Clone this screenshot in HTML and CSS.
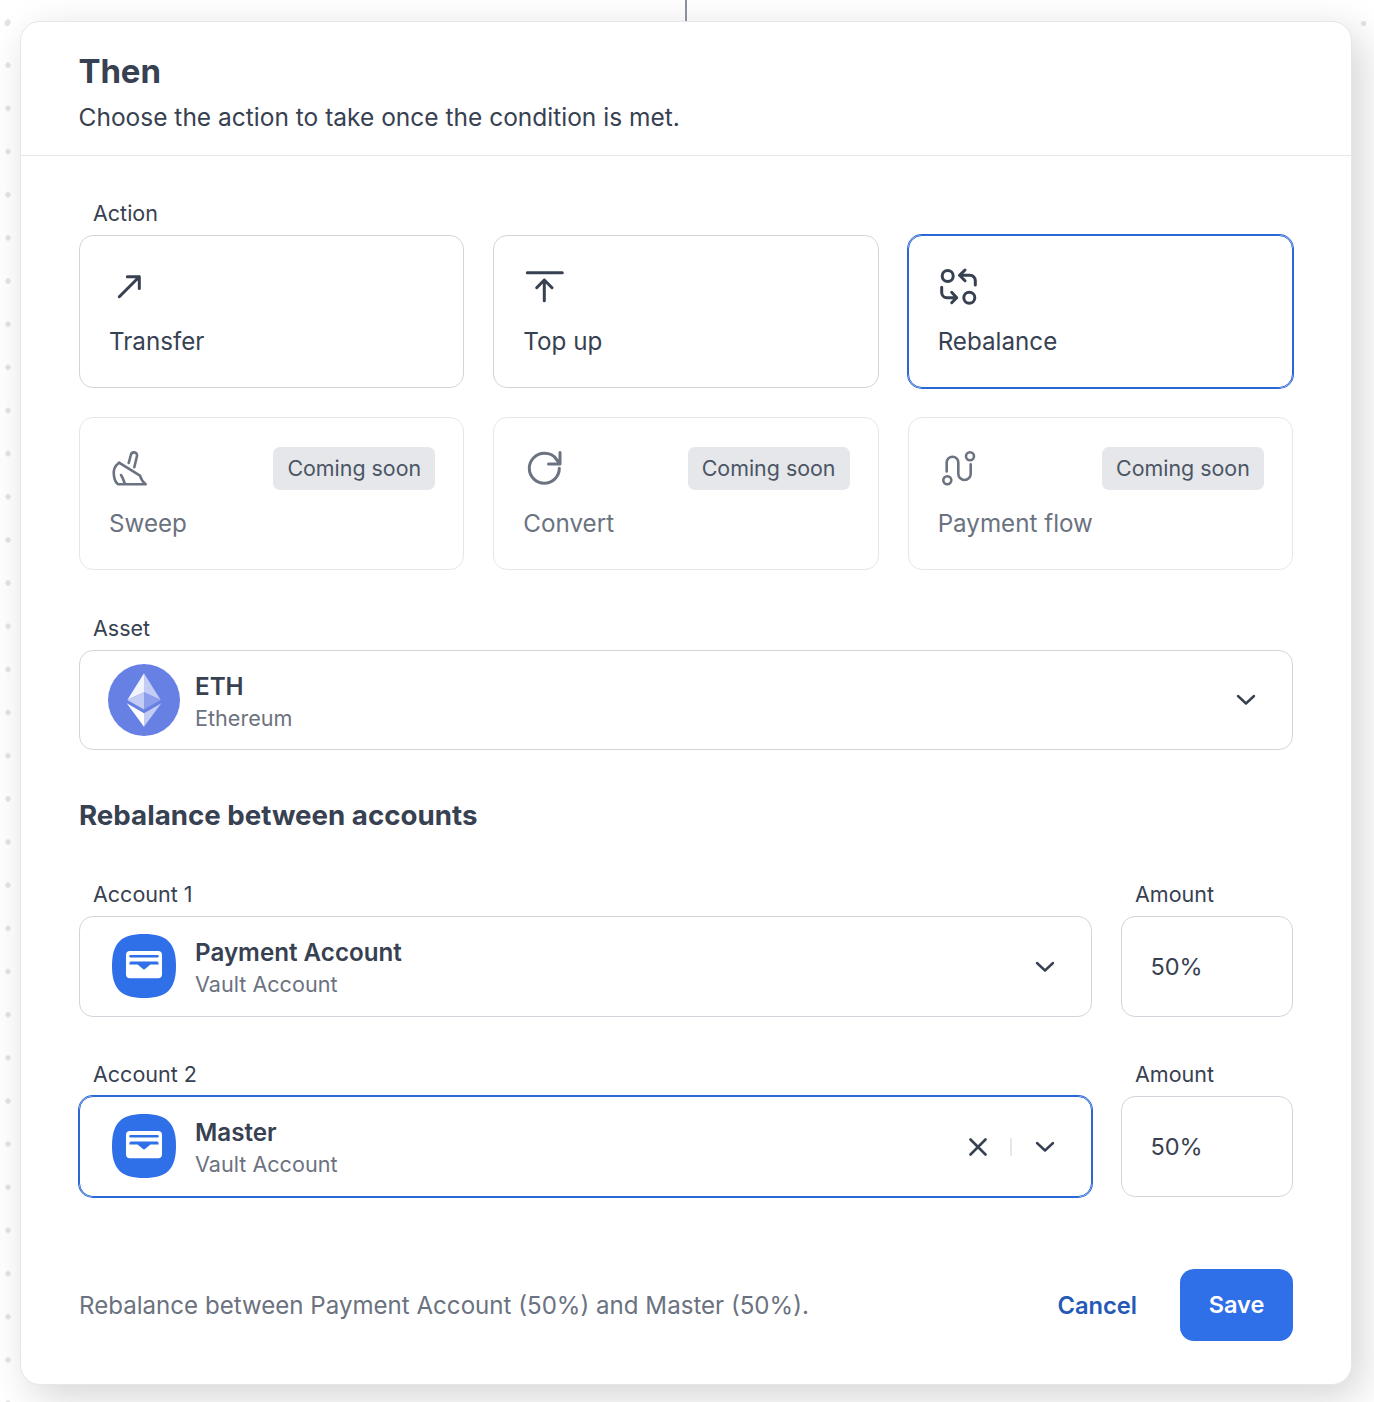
FILE: index.html
```html
<!DOCTYPE html>
<html lang="en">
<head>
<meta charset="utf-8">
<title>Then</title>
<link rel="stylesheet" href="styles.css">
</head>
<body>
<div class="connector"></div>
<main class="panel">
  <header class="panel-head">
    <h1 class="title">Then</h1>
    <p class="subtitle">Choose the action to take once the condition is met.</p>
  </header>
  <div class="panel-body">
    <div class="label">Action</div>
    <div class="actions">
      <div class="action">
        <div class="action-top">
          <svg class="icon" viewBox="0 0 43 43"><path d="M10.3 31.7 30.3 11.7M18.3 11.7H30.3V23.5"/></svg>
        </div>
        <div class="action-name">Transfer</div>
      </div>
      <div class="action">
        <div class="action-top">
          <svg class="icon" viewBox="0 0 43 43"><path d="M4.3 7.7H39.3M21.3 15V35.7M13.7 22.7 21.3 15 29 22.7"/></svg>
        </div>
        <div class="action-name">Top up</div>
      </div>
      <div class="action selected">
        <div class="action-top">
          <svg class="icon" viewBox="0 0 43 43"><circle cx="9.7" cy="11" r="5.5"/><circle cx="31.3" cy="32.7" r="5.5"/><path d="M27 5 21.5 10.3 27 15.7M21.5 10.3H32a5.3 5.3 0 0 1 5.3 5.3V20M3.7 22.3V27.5a5.2 5.2 0 0 0 5.2 5.2H18.7M13.7 27.3 18.7 32.7 13.7 37.7"/></svg>
        </div>
        <div class="action-name">Rebalance</div>
      </div>
      <div class="action disabled">
        <div class="action-top">
          <svg class="icon thin" viewBox="0 0 43 43"><path d="M10 15.7 31 28.7M19.7 16 21.7 8.5C22.5 4 28.5 4.5 28 9L25.3 20.3M10 15.7C5.5 19 4 24 5 29 5.5 33 7 36 9.3 37.3H36.7C33.5 35 32 32 31 28.7M12 28C14 31 15 34 16 37"/></svg>
          <span class="badge">Coming soon</span>
        </div>
        <div class="action-name">Sweep</div>
      </div>
      <div class="action disabled">
        <div class="action-top">
          <svg class="icon" viewBox="0 0 43 43"><path d="M36.3 21.3A15 15 0 1 1 21.3 6.3C26 6.3 31 8.5 33.5 12.5L37 17M37 5.5V17H25.5"/></svg>
          <span class="badge">Coming soon</span>
        </div>
        <div class="action-name">Convert</div>
      </div>
      <div class="action disabled">
        <div class="action-top">
          <svg class="icon thin" viewBox="0 0 43 43"><circle cx="32" cy="9.3" r="4"/><circle cx="9.3" cy="33.3" r="4"/><path d="M8.7 24.5V15.5a5.8 5.8 0 0 1 11.6 0V26.8a6.2 6.2 0 0 0 12.4 0V17.3"/></svg>
          <span class="badge">Coming soon</span>
        </div>
        <div class="action-name">Payment flow</div>
      </div>
    </div>

    <div class="label asset-label">Asset</div>
    <div class="select asset-select">
      <svg class="avatar-eth" viewBox="0 0 72 72">
        <circle cx="36" cy="36" r="36" fill="#6780e3"/>
        <polygon points="36,9.3 19.3,36 36,28.3" fill="#f1f3fd"/>
        <polygon points="36,9.3 36,28.3 52.7,36" fill="#c3ccf5"/>
        <polygon points="19.3,36 36,28.3 36,45.5" fill="#c3ccf5"/>
        <polygon points="36,28.3 52.7,36 36,45.5" fill="#8d9fec"/>
        <polygon points="18.7,39.3 36,49.3 36,62.7" fill="#fff"/>
        <polygon points="36,49.3 53.3,39.3 36,62.7" fill="#c3ccf5"/>
      </svg>
      <div class="select-text">
        <div class="select-name">ETH</div>
        <div class="select-sub">Ethereum</div>
      </div>
      <svg class="chev" viewBox="0 0 20 12"><path d="M2 2 10 9.5 18 2"/></svg>
    </div>

    <h2 class="section-title">Rebalance between accounts</h2>

    <div class="account-row">
      <div class="account-col">
        <div class="label">Account 1</div>
        <div class="select account-select">
          <svg class="avatar-vault" viewBox="0 0 64 64">
            <path class="vault-bg" d="M32 0C55 0 64 9 64 32S55 64 32 64 0 55 0 32 9 0 32 0Z"/>
            <rect class="vault-card" x="14" y="17" width="36" height="27.3" rx="4"/>
            <rect class="vault-bg" x="17.3" y="21" width="29.4" height="2.4" rx="1.2"/>
            <path class="vault-bg" d="M19 27.5H45Q46.7 27.5 46.7 30.5H38.5L32 35.8 25.5 30.5H17.3Q17.3 27.5 19 27.5Z"/>
          </svg>
          <div class="select-text">
            <div class="select-name">Payment Account</div>
            <div class="select-sub">Vault Account</div>
          </div>
          <svg class="chev" viewBox="0 0 20 12"><path d="M2 2 10 9.5 18 2"/></svg>
        </div>
      </div>
      <div class="amount-col">
        <div class="label">Amount</div>
        <div class="amount">50%</div>
      </div>
    </div>

    <div class="account-row second">
      <div class="account-col">
        <div class="label">Account 2</div>
        <div class="select account-select focused">
          <svg class="avatar-vault" viewBox="0 0 64 64">
            <path class="vault-bg" d="M32 0C55 0 64 9 64 32S55 64 32 64 0 55 0 32 9 0 32 0Z"/>
            <rect class="vault-card" x="14" y="17" width="36" height="27.3" rx="4"/>
            <rect class="vault-bg" x="17.3" y="21" width="29.4" height="2.4" rx="1.2"/>
            <path class="vault-bg" d="M19 27.5H45Q46.7 27.5 46.7 30.5H38.5L32 35.8 25.5 30.5H17.3Q17.3 27.5 19 27.5Z"/>
          </svg>
          <div class="select-text">
            <div class="select-name">Master</div>
            <div class="select-sub">Vault Account</div>
          </div>
          <svg class="clear" viewBox="0 0 18 18"><path d="M1.5 1.5 16.5 16.5M16.5 1.5 1.5 16.5"/></svg>
          <span class="divider"></span>
          <svg class="chev" viewBox="0 0 20 12"><path d="M2 2 10 9.5 18 2"/></svg>
        </div>
      </div>
      <div class="amount-col">
        <div class="label">Amount</div>
        <div class="amount">50%</div>
      </div>
    </div>

    <footer class="foot">
      <p class="summary">Rebalance between Payment Account (50%) and Master (50%).</p>
      <a class="cancel">Cancel</a>
      <a class="save">Save</a>
    </footer>
  </div>
</main>
</body>
</html>
```

FILE: styles.css
```css
* { box-sizing: border-box; }

html, body { margin: 0; height: 1402px; overflow: hidden; }

body {
  padding: 21px 22px 17px 20px;
  font-family: Inter, "Noto Sans", sans-serif;
  color: #374151;
  background-color: #fff;
  background-image:
    radial-gradient(circle, #e2e4e8 2.4px, transparent 3px),
    radial-gradient(circle, #e2e4e8 2.4px, transparent 3px);
  background-size: 32.3px 43px, 16px 43.17px;
  background-position: -9px 1.5px, 0 0.5px;
  background-repeat: repeat-x, repeat-y;
}

.connector {
  position: absolute;
  left: 685px;
  top: 0;
  width: 2px;
  height: 21px;
  background: #8a909c;
}

.panel {
  height: 1364px;
  background: #fff;
  border: 1px solid #e5e7eb;
  border-radius: 20px;
  box-shadow: 10px 12px 40px rgba(0, 0, 0, 0.17);
}

.panel-head {
  height: 134px;
  padding: 27px 58px 0 57.5px;
  border-bottom: 1px solid #e5e7eb;
}

.title {
  margin: 0;
  font-size: 33px;
  line-height: 44px;
  font-weight: 700;
  letter-spacing: -0.1px;
}

.subtitle {
  margin: 7px 0 0;
  font-size: 24.5px;
  line-height: 34px;
  font-weight: 400;
}

.panel-body { padding: 44px 58px 0; }

.label {
  padding-left: 14px;
  height: 36px;
  font-size: 21.5px;
  line-height: 26px;
}

.actions {
  display: grid;
  grid-template-columns: repeat(3, 1fr);
  gap: 29px;
  margin-top: -1px;
}

.action {
  height: 153px;
  padding: 29px;
  border: 1px solid #d1d5db;
  border-radius: 14px;
}

.action.selected {
  border-color: #2b68d6;
  box-shadow: 0 0 0 1px #2b68d6;
}

.action.disabled {
  border-color: #e5e7eb;
  color: #6b7280;
}

.action-top {
  display: flex;
  justify-content: space-between;
  align-items: flex-start;
  height: 43px;
}

.icon {
  width: 43px;
  height: 43px;
  fill: none;
  stroke: currentColor;
  stroke-width: 3;
  stroke-linecap: round;
  stroke-linejoin: round;
}

.icon.thin { stroke-width: 2.6; }

.badge {
  height: 43px;
  margin-right: -1px;
  padding: 0 14.2px;
  border-radius: 7px;
  background: #e5e7eb;
  color: #4b5563;
  font-size: 21.4px;
  line-height: 43px;
}

.action-name {
  margin-top: 18px;
  font-size: 24.2px;
  line-height: 32px;
}

.asset-label { margin-top: 45px; }

.select {
  display: flex;
  align-items: center;
  border: 1px solid #d1d5db;
  border-radius: 14px;
  margin-top: -1px;
}

.asset-select {
  height: 100px;
  padding: 0 36px 0 28px;
}

.avatar-eth {
  flex: none;
  width: 72px;
  height: 72px;
  margin-right: 15px;
}

.avatar-vault {
  flex: none;
  width: 64px;
  height: 64px;
  margin: 0 19px 1px 4px;
}

.vault-bg { fill: #2f6fe8; }
.vault-card { fill: #fff; }

.select-text { flex: 1; padding-top: 4px; }

.select-name {
  font-size: 24.2px;
  line-height: 32px;
  font-weight: 600;
}

.select-sub {
  margin-top: -1px;
  font-size: 21.6px;
  line-height: 32px;
  color: #6b7280;
}

.chev {
  flex: none;
  width: 20px;
  height: 12px;
  fill: none;
  stroke: #374151;
  stroke-width: 2.4;
  stroke-linecap: round;
  stroke-linejoin: round;
}

.clear {
  flex: none;
  width: 18px;
  height: 18px;
  fill: none;
  stroke: #374151;
  stroke-width: 2.6;
  stroke-linecap: round;
}

.divider {
  flex: none;
  width: 2px;
  height: 18px;
  margin: 0 23px;
  background: #e5e7eb;
}

.section-title {
  margin: 47px 0 0;
  font-size: 27.7px;
  line-height: 36px;
  font-weight: 700;
}

.account-row {
  display: flex;
  gap: 29px;
  margin-top: 48px;
}

.account-row.second { margin-top: 44px; }

.account-col { flex: 1; }

.amount-col { flex: none; width: 172px; }

.account-select {
  height: 101px;
  padding: 0 36px 0 28px;
}

.account-select.focused {
  border-color: #2b68d6;
  box-shadow: 0 0 0 1px #2b68d6;
}

.amount {
  height: 101px;
  margin-top: -1px;
  padding-left: 28.5px;
  border: 1px solid #d1d5db;
  border-radius: 14px;
  font-size: 23.5px;
  line-height: 99px;
}

.foot {
  display: flex;
  align-items: center;
  margin-top: 72px;
}

.summary {
  flex: 1;
  margin: 0;
  padding-top: 1px;
  font-size: 24.1px;
  line-height: 32px;
  color: #6b7280;
}

.cancel {
  margin-right: 43px;
  font-size: 23.7px;
  font-weight: 600;
  color: #2459b8;
}

.save {
  width: 113px;
  height: 72px;
  border-radius: 14px;
  background: #2f6fe8;
  color: #fff;
  font-size: 23.5px;
  font-weight: 600;
  line-height: 72px;
  text-align: center;
}
```
